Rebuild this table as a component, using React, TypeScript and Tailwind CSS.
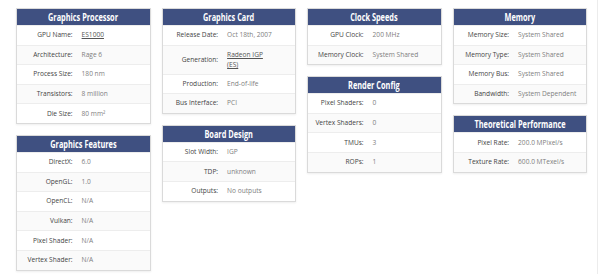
type Row = { label: string; value: React.ReactNode };

type Section = { title: string; rows: Row[] };

function Link({ children }: { children: React.ReactNode }) {
  return <span className="text-[#555] underline underline-offset-1">{children}</span>;
}

const columns: Section[][] = [
  [
    {
      title: "Graphics Processor",
      rows: [
        { label: "GPU Name:", value: <Link>ES1000</Link> },
        { label: "Architecture:", value: "Rage 6" },
        { label: "Process Size:", value: "180 nm" },
        { label: "Transistors:", value: "8 million" },
        { label: "Die Size:", value: "80 mm²" },
      ],
    },
    {
      title: "Graphics Features",
      rows: [
        { label: "DirectX:", value: "6.0" },
        { label: "OpenGL:", value: "1.0" },
        { label: "OpenCL:", value: "N/A" },
        { label: "Vulkan:", value: "N/A" },
        { label: "Pixel Shader:", value: "N/A" },
        { label: "Vertex Shader:", value: "N/A" },
      ],
    },
  ],
  [
    {
      title: "Graphics Card",
      rows: [
        { label: "Release Date:", value: "Oct 18th, 2007" },
        {
          label: "Generation:",
          value: (
            <Link>
              Radeon IGP
              <br />
              (ES)
            </Link>
          ),
        },
        { label: "Production:", value: "End-of-life" },
        { label: "Bus Interface:", value: "PCI" },
      ],
    },
    {
      title: "Board Design",
      rows: [
        { label: "Slot Width:", value: "IGP" },
        { label: "TDP:", value: "unknown" },
        { label: "Outputs:", value: "No outputs" },
      ],
    },
  ],
  [
    {
      title: "Clock Speeds",
      rows: [
        { label: "GPU Clock:", value: "200 MHz" },
        { label: "Memory Clock:", value: "System Shared" },
      ],
    },
    {
      title: "Render Config",
      rows: [
        { label: "Pixel Shaders:", value: "0" },
        { label: "Vertex Shaders:", value: "0" },
        { label: "TMUs:", value: "3" },
        { label: "ROPs:", value: "1" },
      ],
    },
  ],
  [
    {
      title: "Memory",
      rows: [
        { label: "Memory Size:", value: "System Shared" },
        { label: "Memory Type:", value: "System Shared" },
        { label: "Memory Bus:", value: "System Shared" },
        { label: "Bandwidth:", value: "System Dependent" },
      ],
    },
    {
      title: "Theoretical Performance",
      rows: [
        { label: "Pixel Rate:", value: "200.0 MPixel/s" },
        { label: "Texture Rate:", value: "600.0 MTexel/s" },
      ],
    },
  ],
];

function Card({ section }: { section: Section }) {
  return (
    <div className="border border-[#dadada] bg-white shadow-[0_1px_2px_rgba(0,0,0,0.07)]">
      <div className="flex h-4 items-center justify-center bg-[#3f5081] text-white">
        {/* condensed heading: no condensed face installed, so squeeze the bold one */}
        <span className="inline-block scale-x-[0.7] whitespace-nowrap text-[10.5px] font-bold">
          {section.title}
        </span>
      </div>
      {section.rows.map((row, i) => (
        <div
          key={row.label}
          className={`flex min-h-[19.6px] items-center border-t border-[#ededed] py-[4px] first:border-t-0 ${
            i % 2 === 1 ? "bg-[#fafafa]" : "bg-white"
          }`}
        >
          <div className="w-[48%] shrink-0 pr-[8px] text-right text-[#444]">
            {row.label}
          </div>
          <div className="pl-[1px] text-[#808080]">{row.value}</div>
        </div>
      ))}
    </div>
  );
}

export default function App() {
  return (
    <div className="h-[274px] w-[598px] border-r border-[#ececec] bg-white font-['Open_Sans',sans-serif] text-[6.6px] leading-[10px]">
      <div className="box-content grid w-[571px] grid-cols-4 items-start gap-[11px] pl-[16px] pt-[8px]">
        {columns.map((col, ci) => (
          <div key={ci} className="flex flex-col gap-[11px]">
            {col.map((s) => (
              <Card key={s.title} section={s} />
            ))}
          </div>
        ))}
      </div>
    </div>
  );
}
